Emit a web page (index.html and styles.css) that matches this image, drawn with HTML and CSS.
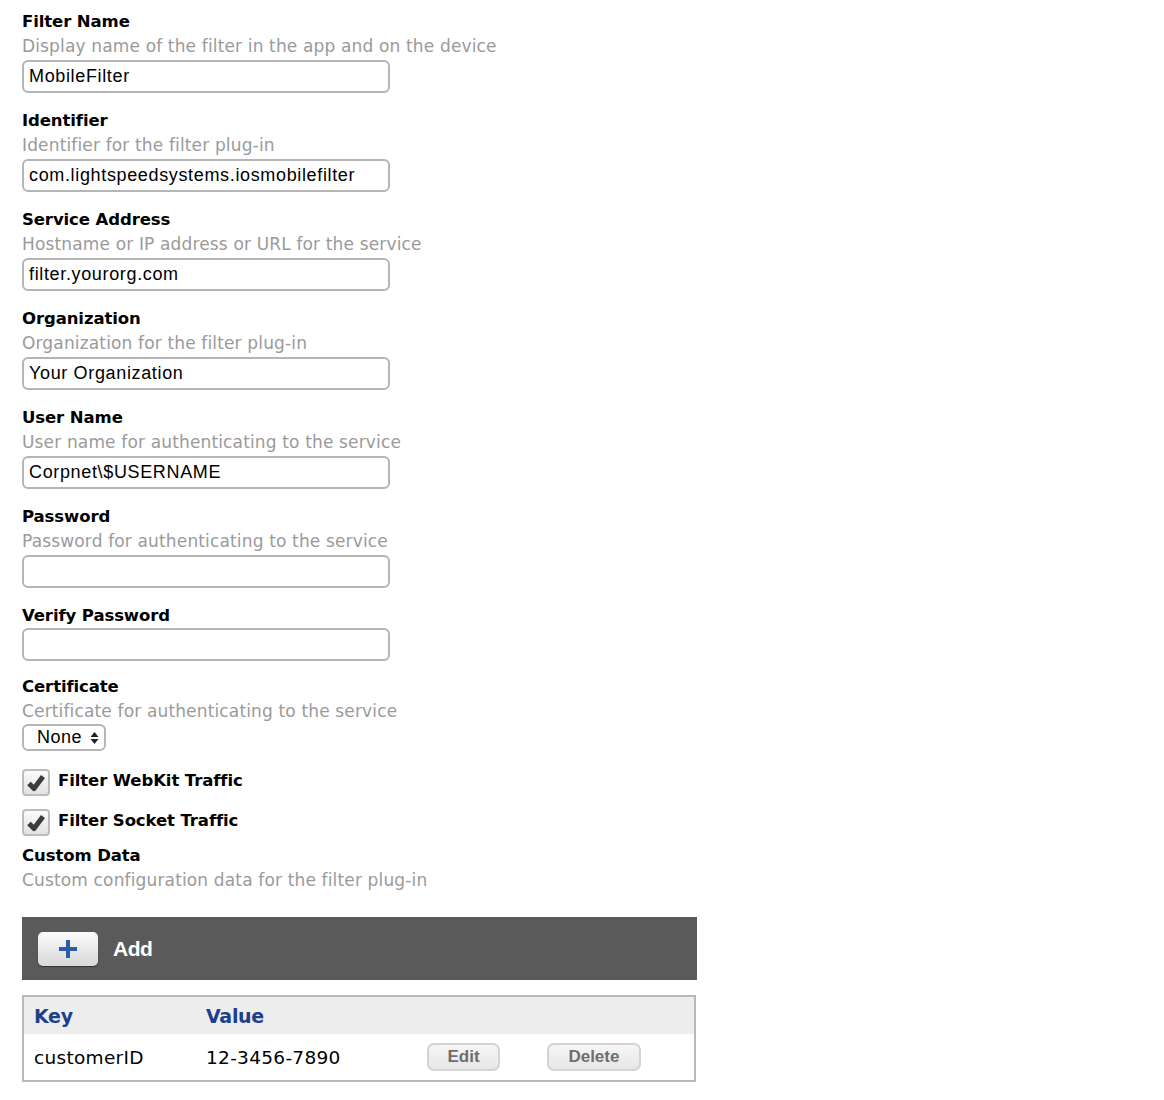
FILE: index.html
```html
<!DOCTYPE html>
<html lang="en">
<head>
    <meta charset="UTF-8">
    <title>Content Filter</title>
    <link rel="stylesheet" href="styles.css">
</head>
<body>
    <div class="form">
        <div class="field">
            <div class="label">Filter Name</div>
            <div class="hint">Display name of the filter in the app and on the device</div>
            <div class="input">MobileFilter</div>
        </div>
        <div class="field">
            <div class="label">Identifier</div>
            <div class="hint">Identifier for the filter plug-in</div>
            <div class="input">com.lightspeedsystems.iosmobilefilter</div>
        </div>
        <div class="field">
            <div class="label">Service Address</div>
            <div class="hint">Hostname or IP address or URL for the service</div>
            <div class="input">filter.yourorg.com</div>
        </div>
        <div class="field">
            <div class="label">Organization</div>
            <div class="hint">Organization for the filter plug-in</div>
            <div class="input">Your Organization</div>
        </div>
        <div class="field">
            <div class="label">User Name</div>
            <div class="hint">User name for authenticating to the service</div>
            <div class="input">Corpnet\$USERNAME</div>
        </div>
        <div class="field">
            <div class="label">Password</div>
            <div class="hint">Password for authenticating to the service</div>
            <div class="input"></div>
        </div>
        <div class="field">
            <div class="label">Verify Password</div>
            <div class="input"></div>
        </div>
        <div class="field cert">
            <div class="label">Certificate</div>
            <div class="hint">Certificate for authenticating to the service</div>
            <div class="select">None
                <svg width="9" height="14" viewBox="0 0 9 14"><path d="M4.5 1 L8.5 6 H0.5 Z M4.5 13 L8.5 8 H0.5 Z" fill="#222"/></svg>
            </div>
        </div>
        <div class="check">
            <span class="box"><svg width="22" height="22" viewBox="0 0 22 22"><path d="M4 11.5 L9 16.5 L18 4.5" fill="none" stroke="#3c3c3c" stroke-width="5" stroke-linejoin="round"/></svg></span>
            <span class="check-text">Filter WebKit Traffic</span>
        </div>
        <div class="check">
            <span class="box"><svg width="22" height="22" viewBox="0 0 22 22"><path d="M4 11.5 L9 16.5 L18 4.5" fill="none" stroke="#3c3c3c" stroke-width="5" stroke-linejoin="round"/></svg></span>
            <span class="check-text">Filter Socket Traffic</span>
        </div>
        <div class="field custom">
            <div class="label">Custom Data</div>
            <div class="hint">Custom configuration data for the filter plug-in</div>
        </div>

        <div class="toolbar">
            <button class="add-btn"><svg width="20" height="20" viewBox="0 0 20 20"><path d="M8 1 H12 V8 H19 V12 H12 V19 H8 V12 H1 V8 H8 Z" fill="#2a5ca8"/></svg></button>
            <span class="add-text">Add</span>
        </div>

        <table class="data">
            <tr class="head">
                <th class="col-key">Key</th>
                <th class="col-value">Value</th>
                <th></th>
                <th></th>
            </tr>
            <tr>
                <td>customerID</td>
                <td>12-3456-7890</td>
                <td class="col-btn"><button class="row-btn edit">Edit</button></td>
                <td class="col-btn"><button class="row-btn delete">Delete</button></td>
            </tr>
        </table>
    </div>
</body>
</html>
```

FILE: styles.css
```css
body {
    margin: 0;
    background: #fff;
    font-family: 'DejaVu Sans', sans-serif;
    color: #000;
}
.form {
    padding: 10px 22px 20px;
}
.field {
    margin-bottom: 16px;
}
.label {
    font-size: 16.5px;
    font-weight: bold;
    line-height: 24px;
    letter-spacing: -0.1px;
}
.hint {
    font-size: 17px;
    line-height: 24px;
    margin-bottom: 2px;
    color: #9a9a9a;
    letter-spacing: 0.15px;
}
.input {
    box-sizing: border-box;
    width: 368px;
    height: 33px;
    border: 2px solid #b5b5b5;
    border-radius: 6px;
    padding: 0 5px;
    font-family: 'Liberation Sans', Arial, sans-serif;
    font-size: 18px;
    letter-spacing: 0.65px;
    line-height: 29px;
    white-space: nowrap;
    overflow: hidden;
}
.cert {
    margin-top: -2px;
    margin-bottom: 18px;
}
.cert .hint {
    margin-bottom: 1px;
}
.select {
    display: inline-flex;
    align-items: center;
    gap: 8px;
    box-sizing: border-box;
    width: 84px;
    height: 27px;
    padding: 0 0 0 13px;
    border: 2px solid #b5b5b5;
    border-radius: 6px;
    font-family: 'Liberation Sans', Arial, sans-serif;
    font-size: 18px;
    letter-spacing: 0.5px;
}
.check {
    display: flex;
    align-items: center;
    gap: 8px;
    height: 27px;
    margin-bottom: 13px;
}
.box {
    display: flex;
    align-items: center;
    justify-content: center;
    box-sizing: border-box;
    width: 28px;
    height: 27px;
    border: 2px solid #bdbdbd;
    border-radius: 4px;
    background: linear-gradient(#fafafa, #e2e2e2);
}
.check-text {
    font-size: 16.5px;
    font-weight: bold;
    letter-spacing: -0.1px;
    margin-top: -5px;
}
.custom {
    margin-top: -5px;
    margin-bottom: 25px;
}
.custom .hint {
    margin-bottom: 0;
}
.toolbar {
    display: flex;
    align-items: center;
    gap: 15px;
    width: 675px;
    height: 63px;
    box-sizing: border-box;
    padding: 0 16px;
    background: #5a5a5a;
}
.add-btn {
    display: flex;
    align-items: center;
    justify-content: center;
    width: 60px;
    height: 34px;
    border: none;
    border-radius: 5px;
    background: linear-gradient(#fbfbfb, #d8d8d8);
    box-shadow: 0 1px 1px rgba(0, 0, 0, 0.4);
    padding: 0;
}
.add-text {
    color: #fff;
    font-family: 'Liberation Sans', Arial, sans-serif;
    font-weight: bold;
    font-size: 21px;
    letter-spacing: -0.5px;
}
.data {
    margin-top: 15px;
    width: 674px;
    border: 2px solid #b9b9b9;
    border-collapse: collapse;
}
.data th {
    text-align: left;
    font-size: 19px;
    color: #1d3f8c;
    height: 37px;
    background: #ededed;
    padding: 0 0 0 10px;
    letter-spacing: -0.3px;
}
.data td {
    font-size: 18.5px;
    height: 46px;
    padding: 0 0 0 10px;
    letter-spacing: 0.3px;
}
.data th.col-key {
    width: 162px;
}
.data th.col-value {
    width: 210px;
}
.data td.col-btn {
    padding: 0;
}
.row-btn {
    box-sizing: border-box;
    height: 28px;
    border: 2px solid #d4d4d4;
    border-radius: 7px;
    background: linear-gradient(#f6f6f6, #e6e6e6);
    font-family: 'Liberation Sans', Arial, sans-serif;
    font-weight: bold;
    font-size: 17px;
    color: #6e6e6e;
    padding: 0;
}
.edit {
    width: 73px;
    margin-left: 11px;
}
.delete {
    width: 94px;
}
```
